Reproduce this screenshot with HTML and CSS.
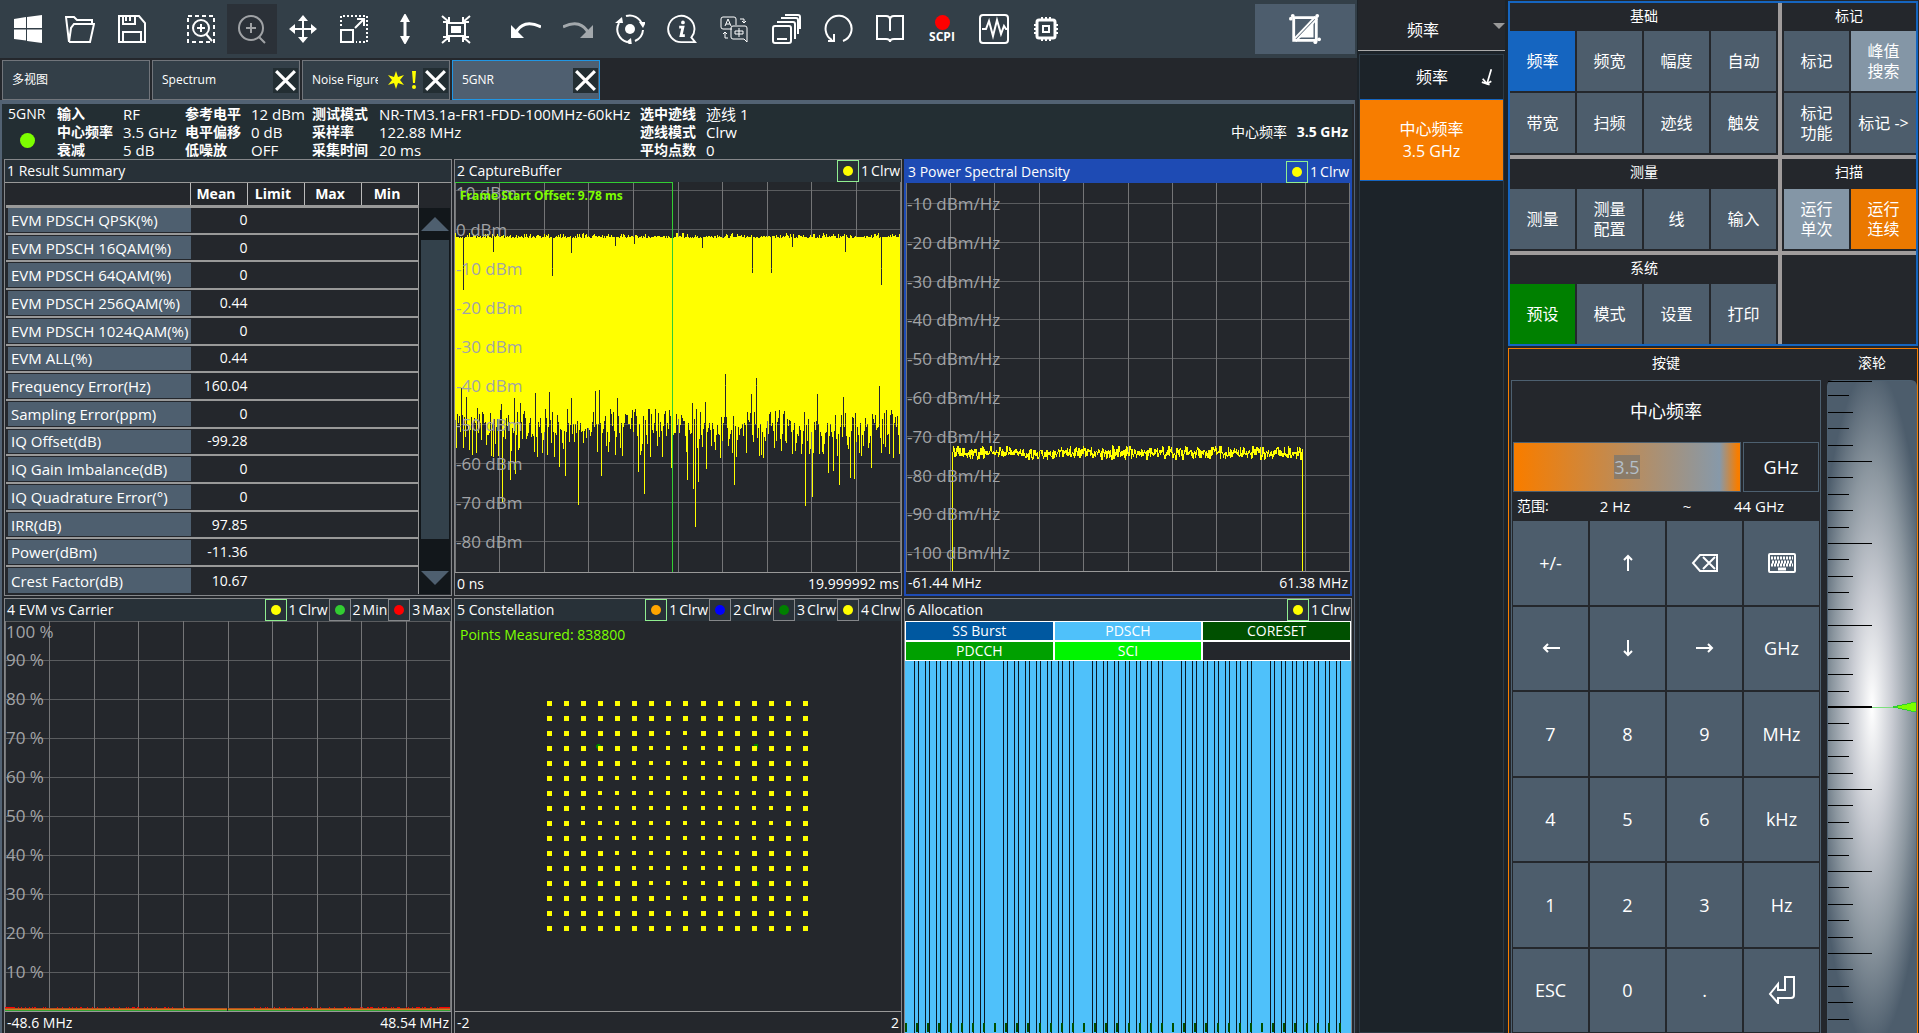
FILE: index.html
```html
<!DOCTYPE html>
<html lang="zh-CN">
<head>
  <meta charset="UTF-8">
  <meta name="viewport" content="width=device-width, initial-scale=1.0">
  <title>5GNR</title>
  <link rel="stylesheet" href="styles.css">
</head>
<body>

  <main class="analyzer">
    <div class="toolbar">
      <div class="tool-group">
        <button class="tool" aria-label="Windows"><svg viewBox="0 0 30 30" fill="#fff"><path d="M1 5l12-2v11H1zM14 3l15-2v13H14zM1 15.500h12v11L1 25zM14 15.500h15V29l-15-2z"/></svg></button>
        <button class="tool" aria-label="Open"><svg viewBox="0 0 30 30"><path d="M4 28L1 3h8l3 3h15v4M4 28h21l4-18H9L6 14 4 28"/></svg></button>
        <button class="tool" aria-label="Save"><svg viewBox="0 0 30 30"><path d="M2 2h20l6 7v19H2zM6 28V18h18v10M6 2v8h12V2M9 2v5M13 2v5"/></svg></button>
      </div>
      <div class="tool-group tight">
        <button class="tool" aria-label="Zoom area"><svg viewBox="0 0 30 30"><path stroke-dasharray="4 3" d="M2 2h26v26H2z"/><circle cx="15" cy="14" r="8" /><path d="M15 10v8M11 14h8M20 20l6 7"/></svg></button>
        <button class="tool pressed" aria-label="Zoom"><svg viewBox="0 0 30 30"><circle cx="14" cy="14" r="12"/><path d="M14 9v10M9 14h10M22 23l6 6"/></svg></button>
        <button class="tool" aria-label="Move"><svg viewBox="0 0 30 30"><path d="M15 4v22M4 15h22"/><path fill="#fff" stroke="none" d="M15 1l5 6H10zM15 29l5-6H10zM1 15l6-5v10zM29 15l-6-5v10z"/></svg></button>
        <button class="tool" aria-label="Scale"><svg viewBox="0 0 30 30"><path stroke-dasharray="2 2" d="M2 12V2h26v26H17"/><path d="M2 16h12v12H2zM16 14l9-9M18 5h7v7"/></svg></button>
        <button class="tool" aria-label="Fit vertical"><svg viewBox="0 0 30 30"><path stroke-width="3" d="M15 5v20"/><path fill="#fff" stroke="none" d="M15-1l5 9H10zM15 31l5-9H10z"/></svg></button>
        <button class="tool" aria-label="Reset zoom"><svg viewBox="0 0 30 30"><path d="M6 9h18v13H6zM1 2l7 6M29 2l-7 6M1 29l7-6M29 29l-7-6M8 3v5H2M22 3v5h6M2 23h6v5M28 23h-6v5"/><path fill="#fff" d="M11 13h8v5h-8z"/></svg></button>
      </div>
      <div class="tool-group">
        <button class="tool" aria-label="Undo"><svg viewBox="0 0 30 30"><path stroke-width="3" d="M4 20Q12 4 30 13"/><path fill="#fff" stroke="none" d="M0 11v13h13z"/></svg></button>
        <button class="tool dim" aria-label="Redo"><svg viewBox="0 0 30 30"><path stroke-width="3" d="M26 20Q18 4 0 13"/><path fill="#fff" stroke="none" d="M30 11v13H17z"/></svg></button>
        <button class="tool" aria-label="Sync"><svg viewBox="0 0 30 30"><circle cx="15" cy="15" r="5" fill="#fff" stroke="none"/><path d="M11 2a13 13 0 0 1 16 8M28 16a13 13 0 0 1-8 11M12 28A13 13 0 0 1 4 9"/><path fill="#fff" stroke="none" d="M24 8l7 0-3 6zM16 24l-5 4 6 4zM0 9l8 0-1-6z"/></svg></button>
        <button class="tool" aria-label="Info"><svg viewBox="0 0 32 32"><path d="M30 30H16A14 14 0 1 1 26 25z"/><circle cx="17" cy="9" r="2" fill="#fff" stroke="none"/><path stroke-width="3" d="M13 14h4l-2 9h4"/></svg></button>
        <button class="tool" aria-label="Language"><svg viewBox="0 0 30 30"><g stroke-width="1"><path d="M13 15H4a2 2 0 0 1-2-2V5a2 2 0 0 1 2-2h11a2 2 0 0 1 2 2v6"/><path d="M6 12l3-7 3 7M7 10h4"/><path d="M14 12h12a2 2 0 0 1 2 2v14l-3-3H14a2 2 0 0 1-2-2v-9a2 2 0 0 1 2-2zM16 17h8v3h-8zM20 14v9M21 5h4v4M23 7l2 2 2-2M9 24H6v-6M4 20l2-2 2 2"/></g></svg></button>
        <button class="tool" aria-label="Windows list"><svg viewBox="0 0 30 30"><rect x="2" y="12" width="18" height="17" rx="2"/><path d="M6 25h10M6 8h16a2 2 0 0 1 2 2v15M10 4h15a2 2 0 0 1 2 2v14"/><path d="M14 1h13a2 2 0 0 1 2 2v12"/></svg></button>
        <button class="tool" aria-label="Repeat"><svg viewBox="0 0 30 30"><path d="M20 27A13 13 0 1 0 9 26M11 20v7H5"/></svg></button>
        <button class="tool" aria-label="Help"><svg viewBox="0 0 30 30"><path d="M2 2h9q4 0 4 4 0-4 4-4h9v23H19q-4 0-4 3 0-3-4-3H2zM15 5v12"/></svg></button>
        <button class="tool scpi"><i class="rec"></i>SCPI</button>
        <button class="tool" aria-label="Waveform"><svg viewBox="0 0 30 30"><rect x="1" y="1" width="28" height="28" rx="3"/><path d="M3 15h4l3-8 4 15 4-16 4 14 3-8 2 3h2"/></svg></button>
        <button class="tool" aria-label="Hardware"><svg viewBox="0 0 30 30"><rect x="6" y="6" width="18" height="18" rx="2" stroke-width="3"/><rect x="12" y="12" width="6" height="6"/><path d="M11 3v3M15 3v3M19 3v3M11 24v3M15 24v3M19 24v3M3 11h3M3 15h3M3 19h3M24 11h3M24 15h3M24 19h3"/></svg></button>
      </div>
      <button class="screen-edit" aria-label="Edit layout"><svg viewBox="0 0 34 34"><path stroke-width="3" d="M5 5h24v24H5z"/><path fill="#fff" stroke="none" d="M26 10v16H10z"/><path d="M5 28L28 4M7 30L30 6"/><g fill="#fff" stroke="none"><circle cx="4" cy="3" r="2"/><circle cx="2" cy="6" r="2"/><circle cx="30" cy="3" r="2"/><circle cx="32" cy="28" r="2"/><circle cx="28" cy="31" r="2"/></g></svg></button>
    </div>

    <nav class="tabs">
      <div class="tab"><button class="tab-name">多视图</button></div>
      <div class="tab"><button class="tab-name">Spectrum</button><button class="close" aria-label="Close"><svg viewBox="0 0 24 24"><path d="M3 3l18 18M21 3L3 21"/></svg></button></div>
      <div class="tab"><button class="tab-name">Noise Figure</button>
        <svg class="warn" viewBox="0 0 30 20"><path fill="#ff0" d="M8 1l2 6 6-2-4 5 4 5-6-2-2 6-2-6-6 2 4-5-4-5 6 2zM24 1h4l-1 12h-2z"/><circle cx="26" cy="17" r="2" fill="#ff0"/></svg>
        <button class="close" aria-label="Close"><svg viewBox="0 0 24 24"><path d="M3 3l18 18M21 3L3 21"/></svg></button></div>
      <div class="tab active"><button class="tab-name">5GNR</button><button class="close" aria-label="Close"><svg viewBox="0 0 24 24"><path d="M3 3l18 18M21 3L3 21"/></svg></button></div>
    </nav>

    <div class="channel">
      <div class="info">
        <div class="mode">5GNR<i class="led"></i></div>
        <div class="settings">
          <b>输入</b><span>RF</span><b>参考电平</b><span>12 dBm</span><b>测试模式</b><span>NR-TM3.1a-FR1-FDD-100MHz-60kHz</span><b>选中迹线</b><span>迹线 1</span>
          <b>中心频率</b><span>3.5 GHz</span><b>电平偏移</b><span>0 dB</span><b>采样率</b><span>122.88 MHz</span><b>迹线模式</b><span>Clrw</span>
          <b>衰减</b><span>5 dB</span><b>低噪放</b><span>OFF</span><b>采集时间</b><span>20 ms</span><b>平均点数</b><span>0</span>
        </div>
        <div class="center-freq">中心频率 <strong>3.5 GHz</strong></div>
      </div>

      <div class="windows">
        <section class="window">
          <header><h2>1 Result Summary</h2></header>
          <div class="summary">
            <table>
              <thead><tr><th></th><th>Mean</th><th>Limit</th><th>Max</th><th>Min</th></tr></thead>
              <tbody id="results"></tbody>
            </table>
            <div class="scrollbar"><i class="up"></i><i class="thumb"></i><i class="down"></i></div>
          </div>
        </section>

        <section class="window">
          <header><h2>2 CaptureBuffer</h2><button class="trace on"><i class="dot yellow"></i></button><span class="trace-name"><span>1</span>Clrw</span></header>
          <div class="plot" id="capture"><p class="note bold">Frame Start Offset: 9.78 ms</p></div>
          <footer><span>0 ns</span><span>19.999992 ms</span></footer>
        </section>

        <section class="window selected">
          <header><h2>3 Power Spectral Density</h2><button class="trace on"><i class="dot yellow"></i></button><span class="trace-name"><span>1</span>Clrw</span></header>
          <div class="plot" id="psd"></div>
          <footer><span>-61.44 MHz</span><span>61.38 MHz</span></footer>
        </section>

        <section class="window">
          <header><h2>4 EVM vs Carrier</h2><button class="trace on"><i class="dot yellow"></i></button><span class="trace-name"><span>1</span>Clrw</span><button class="trace"><i class="dot lime"></i></button><span class="trace-name"><span>2</span>Min</span><button class="trace"><i class="dot red"></i></button><span class="trace-name"><span>3</span>Max</span></header>
          <div class="plot" id="evm"></div>
          <footer><span>-48.6 MHz</span><span>48.54 MHz</span></footer>
        </section>

        <section class="window">
          <header><h2>5 Constellation</h2><button class="trace on"><i class="dot orange"></i></button><span class="trace-name"><span>1</span>Clrw</span><button class="trace"><i class="dot blue"></i></button><span class="trace-name"><span>2</span>Clrw</span><button class="trace"><i class="dot green"></i></button><span class="trace-name"><span>3</span>Clrw</span><button class="trace"><i class="dot yellow"></i></button><span class="trace-name"><span>4</span>Clrw</span></header>
          <div class="plot" id="constellation"><p class="note">Points Measured: 838800</p></div>
          <footer><span>-2</span><span>2</span></footer>
        </section>

        <section class="window">
          <header><h2>6 Allocation</h2><button class="trace on"><i class="dot yellow"></i></button><span class="trace-name"><span>1</span>Clrw</span></header>
          <div class="legend">
            <span class="ss">SS Burst</span><span class="pdsch">PDSCH</span><span class="coreset">CORESET</span>
            <span class="pdcch">PDCCH</span><span class="sci">SCI</span><span></span>
          </div>
          <div class="plot" id="allocation"></div>
        </section>
      </div>
    </div>
  </main>

  <aside class="softkeys">
    <button class="menu-title">频率</button>
    <div class="menu">
      <h2>频率<svg viewBox="0 0 14 20"><path d="M12 1L7 18M2 12l5 6 5-3M1 16l9 3"/></svg></h2>
      <button class="softkey">中心频率<br>3.5 GHz</button>
    </div>
  </aside>

  <aside class="front-panel">
    <div class="hardkeys">
      <section><h2>基础</h2><div class="keys four">
        <button class="key blue-key">频率</button><button class="key">频宽</button><button class="key">幅度</button><button class="key">自动</button>
        <button class="key">带宽</button><button class="key">扫频</button><button class="key">迹线</button><button class="key">触发</button>
      </div></section>
      <section><h2>标记</h2><div class="keys two">
        <button class="key">标记</button><button class="key light">峰值<br>搜索</button>
        <button class="key">标记<br>功能</button><button class="key">标记 -&gt;</button>
      </div></section>
      <section><h2>测量</h2><div class="keys four">
        <button class="key">测量</button><button class="key">测量<br>配置</button><button class="key">线</button><button class="key">输入</button>
      </div></section>
      <section><h2>扫描</h2><div class="keys two">
        <button class="key light">运行<br>单次</button><button class="key orange-key">运行<br>连续</button>
      </div></section>
      <section class="last"><h2>系统</h2><div class="keys four">
        <button class="key green-key">预设</button><button class="key">模式</button><button class="key">设置</button><button class="key">打印</button>
      </div></section>
      <section class="last"></section>
    </div>

    <div class="entry">
      <div class="keypad-side">
        <h2>按键</h2>
        <div class="keypad">
          <label class="entry-title" for="freq">中心频率</label>
          <div class="entry-row"><input id="freq" type="text" value="3.5"><button class="unit">GHz</button></div>
          <div class="range"><span>范围:</span><span>2 Hz</span><span>~</span><span>44 GHz</span></div>
          <div class="pad">
            <button class="key">+/-</button>
            <button class="key" aria-label="Up"><svg viewBox="0 0 18 18"><path d="M9 17V2M5 6l4-4 4 4"/></svg></button>
            <button class="key" aria-label="Backspace"><svg class="wide" viewBox="0 0 28 20"><path d="M9 2h17v16H9L2 10zM12 4l12 12M24 4L12 16"/></svg></button>
            <button class="key" aria-label="Keyboard"><svg class="wide" viewBox="0 0 28 20"><rect x="1" y="1" width="26" height="18" rx="1"/><path stroke-width="3" stroke-dasharray="2 1" d="M3 5h22M4 9h20M3 12h22"/><path stroke-width="3" d="M10 16h8"/></svg></button>
            <button class="key" aria-label="Left"><svg viewBox="0 0 18 18"><path d="M18 9H2M6 5L2 9l4 4"/></svg></button>
            <button class="key" aria-label="Down"><svg viewBox="0 0 18 18"><path d="M9 1v15M5 12l4 4 4-4"/></svg></button>
            <button class="key" aria-label="Right"><svg viewBox="0 0 18 18"><path d="M0 9h16M12 5l4 4-4 4"/></svg></button>
            <button class="key">GHz</button>
            <button class="key">7</button><button class="key">8</button><button class="key">9</button><button class="key">MHz</button>
            <button class="key">4</button><button class="key">5</button><button class="key">6</button><button class="key">kHz</button>
            <button class="key">1</button><button class="key">2</button><button class="key">3</button><button class="key">Hz</button>
            <button class="key">ESC</button><button class="key">0</button><button class="key">.</button>
            <button class="key" aria-label="Enter"><svg class="enter" viewBox="0 0 28 28"><path d="M17 1h9v18q0 3-3 3H10v5L2 18l8-10v6h7z"/></svg></button>
          </div>
        </div>
      </div>
      <div class="wheel-side">
        <h2>滚轮</h2>
        <div class="wheel" id="wheel"></div>
      </div>
    </div>
  </aside>

  <script src="script.js"></script>
</body>
</html>
```

FILE: styles.css
```css
* {
  box-sizing: border-box;
}
body {
  margin: 0;
  display: flex;
  height: 100vh;
  overflow: hidden;
  background: #24272c;
  color: #fff;
  font-family: "Open Sans", "Noto Sans CJK SC", sans-serif;
  font-size: 14px;
  line-height: 18px;
}
button, input {
  margin: 0;
  padding: 0;
  border: none;
  border-radius: 0;
  background: none;
  color: inherit;
  font: inherit;
}
h2, p {
  margin: 0;
  font-size: 14px;
  font-weight: normal;
}
svg {
  display: block;
  fill: none;
  stroke: #fff;
  stroke-width: 2;
}

/* Measurement area */
.analyzer {
  flex: 1;
  min-width: 0;
  display: flex;
  flex-direction: column;
}
.toolbar {
  display: flex;
  height: 58px;
  padding: 4px 2px 4px 3px;
  background: #333f48;
}
.tool-group {
  display: flex;
  gap: 2px;
  margin-right: 19px;
}
.tool-group.tight {
  gap: 1px;
  margin-right: 20px;
}
.tool {
  display: flex;
  flex-direction: column;
  align-items: center;
  justify-content: center;
  width: 50px;
  height: 50px;
}
.tool svg {
  width: 30px;
  height: 30px;
}
.tool.pressed {
  background: #2b3138;
}
.tool.pressed svg, .tool.dim svg {
  opacity: 0.55;
}
.tool svg[fill="#fff"] {
  fill: #fff;
  stroke: none;
}
.scpi {
  font-size: 12px;
  font-weight: bold;
  line-height: 14px;
}
.rec {
  width: 15px;
  height: 15px;
  border-radius: 50%;
  background: #f00;
}
.screen-edit {
  display: flex;
  align-items: center;
  justify-content: center;
  width: 100px;
  margin-left: auto;
  background: #4d5d6d;
}
.screen-edit svg {
  width: 32px;
  height: 32px;
}
.tabs {
  display: flex;
  gap: 2px;
  height: 42px;
  padding: 2px 2px 0;
}
.tab {
  display: flex;
  align-items: center;
  gap: 2px;
  width: 148px;
  padding: 0 1px 0 9px;
  border: 1px solid #71757b;
  background: #333f48;
  font-size: 12px;
}
.tab.active {
  border-color: #2196e3;
  background: #4f5f70;
}
.tab-name {
  flex: 1;
  overflow: hidden;
  white-space: nowrap;
  text-align: left;
}
.close {
  width: 25px;
  height: 25px;
  background: #232e33;
}
.close svg {
  width: 25px;
  stroke-width: 3;
}
.warn {
  width: 30px;
  height: 20px;
  margin: 0 3px 0 8px;
  stroke: none;
}
.channel {
  flex: 1;
  min-height: 0;
  display: flex;
  flex-direction: column;
  margin-right: 2px;
  padding-right: 2px;
  border: solid #526273;
  border-width: 4px 1px 0 2px;
}
.info {
  display: flex;
  align-items: center;
  height: 55px;
  padding: 0 4px 0 6px;
  background: #232e33;
  white-space: nowrap;
}
.mode {
  width: 49px;
  height: 54px;
}
.led {
  display: block;
  width: 15px;
  height: 15px;
  margin: 10px 12px;
  border-radius: 50%;
  background: #7dff00;
}
.settings {
  display: grid;
  grid-template-columns: 66px 62px 66px 61px 67px 261px 66px auto;
  grid-auto-rows: 18px;
}
.settings span {
  font-size: 15px;
}
.center-freq {
  margin-left: auto;
}
.center-freq strong {
  margin-left: 6px;
}
.windows {
  flex: 1;
  min-height: 0;
  display: grid;
  grid-template-columns: repeat(3, 1fr);
  grid-template-rows: 1fr 1fr;
  gap: 2px;
  margin-bottom: -2px;
  padding-left: 2px;
}
.window {
  display: flex;
  flex-direction: column;
  min-width: 0;
  min-height: 0;
  border: 1px solid #85878a;
}
.window header {
  display: flex;
  align-items: center;
  height: 22px;
  padding-left: 2px;
  background: #283138;
}
.window h2 {
  flex: 1;
}
.window.selected {
  border: 2px solid #1e4bb4;
}
.selected header {
  background: #1e4bb4;
}
.trace {
  display: flex;
  align-items: center;
  justify-content: center;
  width: 22px;
  height: 22px;
  border: 1px solid #85878a;
}
.trace.on {
  border-color: #90ee90;
}
.trace-name {
  display: flex;
  gap: 2px;
  padding: 0 1px 0 2px;
}
.dot {
  width: 10px;
  height: 10px;
  border-radius: 50%;
}
.yellow { background: #ff0; }
.lime { background: #32cd32; }
.red { background: #f00; }
.orange { background: #ffa500; }
.blue { background: #00f; }
.green { background: #008000; }
.window footer {
  display: flex;
  justify-content: space-between;
  height: 23px;
  padding: 2px;
  border-top: 1px solid #999;
}
.plot {
  position: relative;
  flex: 1;
  min-height: 0;
}
.plot svg {
  position: absolute;
  width: 100%;
  height: 100%;
  stroke-width: 1;
}
.y-label {
  position: absolute;
  left: 1px;
  color: #a2a4a7;
  font-size: 17px;
  line-height: 20px;
}
.note {
  position: absolute;
  top: 5px;
  left: 5px;
  z-index: 1;
  color: #7dff00;
}
.note.bold {
  font-size: 12px;
  font-weight: bold;
}

/* Result table */
.summary {
  flex: 1;
  min-height: 0;
  display: flex;
  padding: 0 1px 1px;
  border-top: 1px solid #999;
}
table {
  flex: 1;
  height: 100%;
  border-collapse: collapse;
  table-layout: fixed;
}
th {
  width: 57px;
  height: 23px;
  padding: 0 6px 0 0;
  border-right: 1px solid #bbb;
}
th:first-child {
  width: auto;
}
td {
  padding: 0;
  text-align: right;
}
tbody tr {
  border-top: 2px solid #999;
}
tbody tr:first-child {
  border-top-width: 3px;
}
tbody td:last-child {
  border-right: 1px solid #999;
}
tbody th {
  padding: 1px 0 1px 2px;
  border: none;
  background: #4e5f6f content-box;
  font-size: 15px;
  font-weight: normal;
  text-align: left;
  text-indent: 3px;
  white-space: nowrap;
}
.scrollbar {
  display: flex;
  flex-direction: column;
  align-items: center;
  width: 31px;
  margin-top: 25px;
  padding: 9px 1px;
  background: #12171b;
}
.up, .down {
  border: 14px solid transparent;
}
.up {
  border-top: none;
  border-bottom-color: #4e5f6f;
}
.down {
  border-bottom: none;
  border-top-color: #4e5f6f;
}
.thumb {
  flex: 1;
  width: 28px;
  margin: 9px 0 32px;
  background: #33414b;
}

/* Allocation legend */
.legend {
  display: grid;
  grid-template-columns: repeat(3, 1fr);
}
.legend span {
  height: 20px;
  border: 1px solid #fff;
  text-align: center;
}
.ss { background: #0058a0; }
.pdsch { background: #4fc1fa; }
.coreset { background: #005000; }
.pdcch { background: #00a000; }
.sci { background: #00f500; }

/* Softkey menu */
.softkeys {
  display: flex;
  flex-direction: column;
  width: 151px;
  padding: 0 3px 0 1px;
  background: #1c2329;
  font-size: 16px;
}
.menu-title {
  position: relative;
  height: 51px;
  padding: 10px 17px 0 0;
  border-bottom: 1px solid #aaa;
  background: #24272c;
}
.menu-title::after {
  content: "";
  position: absolute;
  top: 23px;
  right: 0;
  border: 6px solid transparent;
  border-top-color: #999;
  border-bottom: none;
}
.menu {
  flex: 1;
  margin: 3px 1px 0;
  border: 1px solid #2d3a45;
}
.menu h2 {
  display: flex;
  align-items: center;
  justify-content: flex-end;
  gap: 33px;
  height: 44px;
  padding-right: 10px;
  font-size: 16px;
}
.menu svg {
  width: 12px;
  height: 20px;
}
.softkey {
  width: 100%;
  height: 82px;
  border: 1px solid #1565c0;
  border-width: 1px 0;
  background: #f77d00;
  line-height: 22px;
}

/* Front panel keys */
.front-panel {
  display: flex;
  flex-direction: column;
  gap: 2px;
  width: 411px;
  padding: 1px 1px 0 0;
}
.hardkeys {
  display: grid;
  grid-template-columns: 1fr 134px;
  grid-template-rows: 152px 92px 89px;
  gap: 4px;
  border: 2px solid #1565c0;
  background: #a09c9c;
}
.hardkeys section {
  display: flex;
  flex-direction: column;
  padding-bottom: 2px;
  background: #24272c;
}
.hardkeys section.last {
  padding-bottom: 0;
}
.hardkeys h2 {
  flex: 1;
  line-height: 26px;
  text-align: center;
}
.keys {
  display: grid;
  gap: 2px;
}
.four {
  grid-template-columns: repeat(4, 1fr);
  padding-right: 2px;
}
.two {
  grid-template-columns: repeat(2, 1fr);
  padding-left: 2px;
}
.key {
  display: flex;
  align-items: center;
  justify-content: center;
  background: #4d5d6c;
}
.keys .key {
  height: 60px;
  font-size: 16px;
  line-height: 20px;
}
.hardkeys .blue-key { background: #1565c0; }
.hardkeys .green-key { background: #008000; }
.hardkeys .light { background: #8496a6; }
.hardkeys .orange-key { background: #eb7900; }

/* Number entry */
.entry {
  flex: 1;
  min-height: 0;
  display: flex;
  gap: 6px;
  padding-left: 2px;
  border: 1px solid #f77d00;
  border-bottom: none;
}
.keypad-side {
  flex: 1;
  display: flex;
  flex-direction: column;
}
.entry h2 {
  height: 31px;
  line-height: 27px;
  text-align: center;
}
.keypad {
  flex: 1;
  display: flex;
  flex-direction: column;
  padding: 0 1px 1px;
  border: 1px solid #4d6070;
  border-bottom: none;
}
.entry-title {
  height: 61px;
  font-size: 18px;
  line-height: 61px;
  text-align: center;
}
.entry-row {
  display: grid;
  grid-template-columns: 3fr 1fr;
  gap: 2px;
  height: 50px;
  font-size: 18px;
}
.entry-row input {
  min-width: 0;
  border: 1px solid #4d6070;
  background: linear-gradient(90deg, #f77d00 2%, #8799a9 91%, #f77d00 99%);
  outline: none;
  text-align: center;
}
.entry-row input::selection {
  background: #8b7b68;
  color: #b4bfc8;
}
.unit {
  border: 1px solid #4d6070;
}
.range {
  display: grid;
  grid-template-columns: 62px repeat(3, 1fr);
  height: 29px;
  padding: 5px 24px 6px 4px;
  font-size: 15px;
  white-space: nowrap;
}
.range span {
  text-align: center;
}
.range span:first-child {
  font-size: 14px;
  text-align: left;
}
.pad {
  flex: 1;
  display: grid;
  grid-template-columns: repeat(4, 1fr);
  grid-template-rows: repeat(6, 1fr);
  gap: 2px;
  font-size: 18px;
}
.pad svg {
  width: 18px;
  height: 18px;
}
.pad svg.wide {
  width: 28px;
  height: 20px;
}
.pad svg.enter {
  width: 28px;
  height: 28px;
}
.wheel-side {
  display: flex;
  flex-direction: column;
  width: 90px;
}
.wheel {
  flex: 1;
  position: relative;
  border: 1px solid #4d6070;
  border-bottom: none;
  border-top-left-radius: 6px;
  border-top-right-radius: 6px;
  background: radial-gradient(ellipse 65% 52% at 50% 50%, #fff 0%, #c9ccd3 35%, #8b969f 70%, #4d5d6c 100%);
}
.wheel svg {
  position: absolute;
  width: 100%;
  height: 100%;
  stroke-width: 1;
}
```

FILE: script.js
```js
const results = [
  ["EVM PDSCH QPSK(%)", "0"],
  ["EVM PDSCH 16QAM(%)", "0"],
  ["EVM PDSCH 64QAM(%)", "0"],
  ["EVM PDSCH 256QAM(%)", "0.44"],
  ["EVM PDSCH 1024QAM(%)", "0"],
  ["EVM ALL(%)", "0.44"],
  ["Frequency Error(Hz)", "160.04"],
  ["Sampling Error(ppm)", "0"],
  ["IQ Offset(dB)", "-99.28"],
  ["IQ Gain Imbalance(dB)", "0"],
  ["IQ Quadrature Error(°)", "0"],
  ["IRR(dB)", "97.85"],
  ["Power(dBm)", "-11.36"],
  ["Crest Factor(dB)", "10.67"]
];

document.getElementById("results").innerHTML = results.map(([name, mean]) =>
  `<tr><th>${name}</th><td>${mean}</td><td></td><td></td><td></td></tr>`
).join("");

// Repeatable noise
let seed = 7;
function rnd() {
  seed = (seed * 16807) % 2147483647;
  return seed / 2147483647;
}

function draw(id, width, height, content) {
  document.getElementById(id).insertAdjacentHTML("beforeend",
    `<svg viewBox="0 0 ${width} ${height}" preserveAspectRatio="none" shape-rendering="crispEdges">${content}</svg>`);
}

function grid(width, height, firstLine) {
  let h = "", v = "";
  for (let i = 0; i < 10; i++) h += `M0 ${Math.round(firstLine + i * height / 10)}.5H${width}`;
  for (let i = 0; i <= 10; i++) v += `M${Math.min(width - 1, Math.floor(i * width / 10))}.5 0V${height}`;
  return `<path d="${h}" stroke="#5a5c5f"/><path d="${v}" stroke="#747577"/>`;
}

function labels(id, texts, height, first) {
  document.getElementById(id).insertAdjacentHTML("beforeend", texts.map((text, i) =>
    `<span class="y-label" style="top:calc(${(first + i * height / 10) / height * 100}% - 9px)">${text}</span>`
  ).join(""));
}

// 2 CaptureBuffer
const drops = {8: 108, 38: 70, 97: 94, 116: 71, 160: 64, 179: 62, 247: 66, 297: 91, 316: 91, 337: 65, 390: 70, 426: 103};
const peaks = {
  6: 206, 11: 215, 59: 216, 80: 211, 94: 210, 116: 216, 140: 209, 144: 208, 162: 216, 237: 221, 250: 220,
  270: 192, 296: 212, 301: 196, 362: 212, 388: 215, 424: 204, 46: 222, 65: 221, 28: 232, 35: 231, 102: 233,
  47: 320, 123: 323, 189: 312, 240: 345, 55: 298, 110: 294, 146: 294, 183: 290, 216: 286, 232: 298, 238: 307,
  243: 300, 251: 287, 279: 303, 350: 324, 357: 315, 373: 291, 378: 289, 384: 303, 395: 296, 399: 297, 416: 286, 104: 285, 60: 292
};
let wave = "";
for (let x = 0; x < 445; x++) {
  const top = drops[x] || 54 + (rnd() < 0.3 ? -3 * rnd() : rnd() * 2);
  let bottom = 240 + rnd() * 15;
  const r = rnd();
  if (r < 0.3) bottom = 226 + rnd() * 16;
  else if (r > 0.75) bottom = 254 + rnd() * 22;
  wave += `M${x + 0.5} ${top.toFixed(1)}V${(peaks[x] || bottom).toFixed(1)}`;
}
draw("capture", 446, 390, grid(446, 390, 8) +
  `<path d="${wave}" stroke="#ff0"/><path d="M0 .5H217.500V390" stroke="#32cd32"/>`);
labels("capture", ["10 dBm"], 390, 10);
labels("capture", ["0 dBm", "-10 dBm", "-20 dBm", "-30 dBm", "-40 dBm", "-50 dBm", "-60 dBm", "-70 dBm", "-80 dBm"], 390, 47);

// 3 Power Spectral Density
let psd = "M46.500 388V272";
for (let x = 47; x < 396; x += 0.5) psd += `L${x} ${(270 + (rnd() + rnd() - 1) * 8).toFixed(1)}`;
draw("psd", 444, 388, grid(444, 388, 20) + `<path d="${psd}L396.500 266V388" stroke="#ff0"/>`);
labels("psd", [10, 20, 30, 40, 50, 60, 70, 80, 90, 100].map(n => `-${n} dBm/Hz`), 388, 20);

// 4 EVM vs Carrier
let max = "";
for (let x = 0; x < 445; x++) {
  const edge = Math.abs(x - 222) / 222;
  if (x < 10 || x > 433 || rnd() < edge * 0.45) max += `M${x} 386.500h1`;
}
draw("evm", 446, 390, grid(446, 390, 0) +
  `<path d="M0 387.500H445" stroke="#b8501c"/><path d="M0 388.500H445" stroke="#d08020"/><path d="M0 389.500H445" stroke="#32a032"/>
   <path d="${max}" stroke="#f00"/><path d="M222 387v3" stroke="#24272c"/>`);
labels("evm", ["100 %"], 390, 10);
labels("evm", [90, 80, 70, 60, 50, 40, 30, 20, 10].map(n => n + " %"), 390, 38);

// 5 Constellation, 256QAM
let points = `<g fill="#008000"><circle cx="143.500" cy="125.500" r="2.500"/><circle cx="301" cy="125.500" r="2.500"/><circle cx="144" cy="263" r="2.500"/><circle cx="301.500" cy="263" r="2.500"/></g><g fill="#ff0">`;
for (let row = 0; row < 16; row++) {
  for (let col = 0; col < 16; col++) {
    const size = Math.abs(row - 7.5) + Math.abs(col - 7.5) > 6 ? 5 : 4;
    points += `<rect x="${92 + Math.round(col * 17.06)}" y="${80 + Math.round(row * 14.97)}" width="${size}" height="${size}" rx="1"/>`;
  }
}
draw("constellation", 446, 390, `<g stroke="none">${points}</g></g>`);

// 6 Allocation
let bars = "", control = "";
for (let frame = 0; frame < 5; frame++) {
  for (let slot = 0; slot < 7; slot++) {
    const x = 9 + frame * 89 + slot * 11;
    bars += `M${x}.5 0V373M${x + 4}.5 0V373`;
  }
}
for (let i = 0; i < 40; i++) control += `M${Math.round(i * 11.125)} 362h2v9h-2z`;
draw("allocation", 446, 373, `<rect width="446" height="373" fill="#4fc1fa" stroke="none"/>
  <path d="${bars}" stroke="#0a1a24"/><path d="${control}" fill="#005000" stroke="none"/>`);

// Wheel scale
let ticks = "";
for (let i = 1; i < 40; i++) {
  const length = i % 5 === 0 ? 44 : i % 2 ? 21 : 25;
  if (i !== 20) ticks += `M0 ${Math.round(i * 16.4 - 2)}.5h${length}`;
}
draw("wheel", 88, 652, `<path d="M0 .5h44${ticks}" stroke="#000"/><path d="M0 326h44" stroke="#000" stroke-width="2"/>
  <path d="M44 326h22" stroke="#7de07d"/><path d="M65 326l23-5v10z" fill="#7dff00" stroke="#32cd32"/>`);

document.getElementById("freq").select();
```
